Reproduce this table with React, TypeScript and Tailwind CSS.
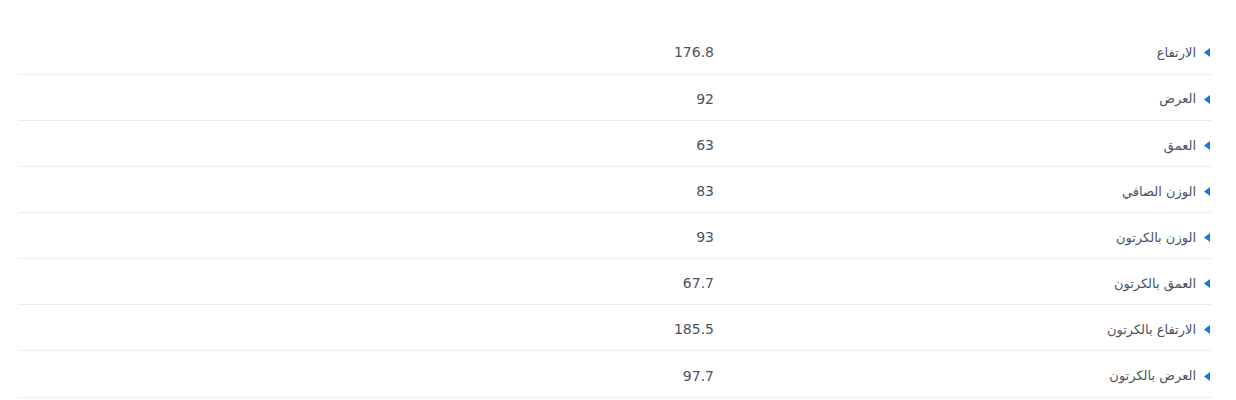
const rows: [string, string][] = [
  ['الارتفاع', '176.8'],
  ['العرض', '92'],
  ['العمق', '63'],
  ['الوزن الصافي', '83'],
  ['الوزن بالكرتون', '93'],
  ['العمق بالكرتون', '67.7'],
  ['الارتفاع بالكرتون', '185.5'],
  ['العرض بالكرتون', '97.7'],
]

export default function App() {
  return (
    <div className="min-h-screen bg-white pt-7 pl-[18px] pr-[24px]" style={{ fontFamily: '"DejaVu Sans", sans-serif' }}>
      <table dir="rtl" className="w-full border-collapse text-[14px] text-[#4d5262]">
        <tbody>
          {rows.map(([label, value]) => (
            <tr key={label} className="border-b border-[#ebebeb]">
              <td className="w-[498px] h-[46.15px] pt-[4px] pr-[2px] align-middle">
                <div className="flex items-center gap-[8px]">
                  <svg width="6" height="9" viewBox="0 0 6 9" className="shrink-0">
                    <path d="M0 4.5 L6 0 L6 9 Z" fill="#1a73e8" />
                  </svg>
                  <span className="text-[13px]">{label}</span>
                </div>
              </td>
              <td className="h-[46.15px] pt-[4px] align-middle">{value}</td>
            </tr>
          ))}
        </tbody>
      </table>
    </div>
  )
}
